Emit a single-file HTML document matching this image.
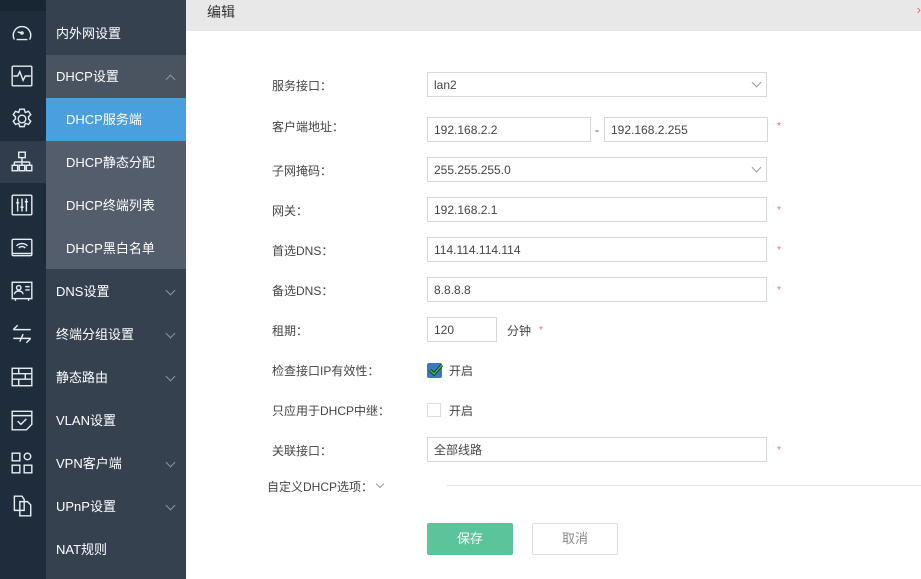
<!DOCTYPE html>
<html><head><meta charset="utf-8"><style>
*{margin:0;padding:0;box-sizing:border-box}
body{width:921px;height:579px;overflow:hidden;background:#fff;font-family:"Liberation Sans","Noto Sans CJK SC",sans-serif;position:relative}
.ic{position:absolute;left:0;top:0;width:46px;height:579px;background:#1f2c3b}
.ic .top{position:absolute;left:0;top:0;width:46px;height:11px;background:#1a2534}
.ic .hl{position:absolute;left:0;top:141px;width:46px;height:42px;background:#313d4c}
.ic svg{position:absolute;left:10px;width:24px;height:24px;fill:none;stroke:#e6ecf2;stroke-width:1.3}
.menu{position:absolute;left:46px;top:0;width:140px;height:579px;background:#364150}
.mi{position:absolute;left:0;width:140px;height:43px;line-height:43px;color:#fff;font-size:13px;padding-left:10px}
.mi.sub{padding-left:20px;background:#535d6b}
.mi.act{background:#4a9fdf}
.mi.grp{background:#4a5461}
.chev{position:absolute;right:12px;top:17px;width:7px;height:7px;border-right:1px solid #8a95a2;border-bottom:1px solid #8a95a2;transform:rotate(45deg)}
.chev.up{transform:rotate(-135deg);top:21px}
.hdr{position:absolute;left:186px;top:0;width:735px;height:31px;background:#e8e8e8;font-size:14px;color:#333;padding:2px 0 0 21px}
.lbl{position:absolute;left:272px;font-size:12px;color:#444}
.inp{position:absolute;height:25px;border:1px solid #d8d8d8;font-size:12px;color:#444;padding-left:6px;line-height:25px}
.star{position:absolute;color:#e66;font-size:10px}
.dd{position:absolute;right:6px;top:6px;width:7px;height:7px;border-right:1px solid #999;border-bottom:1px solid #999;transform:rotate(45deg)}
.t{position:absolute;font-size:12px;color:#444}
</style></head><body>
<div class="ic"><div class="top"></div><div class="hl"></div>
<svg style="top:21px" viewBox="0 0 22 22"><path d="M4 17A8 8 0 1 1 18 17"/><path d="M6 17h10M11 11l-4-1"/><circle cx="11" cy="11" r="1"/></svg>
<svg style="top:64px" viewBox="0 0 22 22"><rect x="2" y="2" width="18" height="18" rx="1"/><path d="M3 11h4l2-4 3 8 2-4h5"/></svg>
<svg style="top:107px" viewBox="0 0 22 22"><circle cx="11" cy="11" r="3.5"/><path d="M9 2h4l1 3 3-1 2 3-2 2 0 2 2 2-2 3-3-1-1 3h-4l-1-3-3 1-2-3 2-2v-2l-2-2 2-3 3 1z"/></svg>
<svg style="top:150px" viewBox="0 0 22 22"><rect x="8" y="2" width="6" height="5"/><path d="M11 7v4M4 11h14M4 11v3M11 11v3M18 11v3"/><rect x="2" y="14" width="5" height="5"/><rect x="8.5" y="14" width="5" height="5"/><rect x="15" y="14" width="5" height="5"/></svg>
<svg style="top:193px" viewBox="0 0 22 22"><rect x="2" y="2" width="18" height="18" rx="1"/><path d="M7 5v12M11 5v12M15 5v12M5.5 9h3M9.5 13h3M13.5 8h3"/></svg>
<svg style="top:236px" viewBox="0 0 22 22"><rect x="2" y="3" width="18" height="15" rx="1"/><path d="M2 16h18M6 9a7 7 0 0 1 10 0M8 11a4 4 0 0 1 6 0"/></svg>
<svg style="top:279px" viewBox="0 0 22 22"><rect x="2" y="3" width="18" height="15"/><circle cx="8" cy="8" r="2"/><path d="M4 14a4 3 0 0 1 8 0M14 7h4M14 10h4M5 18v2M17 18v2"/></svg>
<svg style="top:322px" viewBox="0 0 22 22"><path d="M3 7h16M3 7l4-4M19 15H3M19 15l-4 4M12 11l-3 7"/></svg>
<svg style="top:365px" viewBox="0 0 22 22"><rect x="2" y="3" width="18" height="16"/><path d="M2 8h18M2 13h18M8 3v5M14 8v5M8 13v6"/></svg>
<svg style="top:408px" viewBox="0 0 22 22"><path d="M2 3h18v12l-5 5H2zM2 7h18M7 12l3 3 5-5"/></svg>
<svg style="top:451px" viewBox="0 0 22 22"><rect x="2" y="2" width="7" height="7"/><rect x="2" y="13" width="7" height="7"/><rect x="13" y="13" width="7" height="7"/><circle cx="16" cy="5" r="3"/></svg>
<svg style="top:494px" viewBox="0 0 22 22"><path d="M4 2h7l2 3v10H4zM9 7h7l3 3v10H9z"/></svg>
</div>
<div class="menu">
<div class="mi" style="top:12px">内外网设置</div>
<div class="mi grp" style="top:55px">DHCP设置<span class="chev up"></span></div>
<div class="mi sub act" style="top:98px">DHCP服务端</div>
<div class="mi sub" style="top:141px">DHCP静态分配</div>
<div class="mi sub" style="top:184px">DHCP终端列表</div>
<div class="mi sub" style="top:227px;height:42px">DHCP黑白名单</div>
<div class="mi" style="top:270px">DNS设置<span class="chev"></span></div>
<div class="mi" style="top:313px">终端分组设置<span class="chev"></span></div>
<div class="mi" style="top:356px">静态路由<span class="chev"></span></div>
<div class="mi" style="top:399px">VLAN设置</div>
<div class="mi" style="top:442px">VPN客户端<span class="chev"></span></div>
<div class="mi" style="top:485px">UPnP设置<span class="chev"></span></div>
<div class="mi" style="top:528px">NAT规则</div>
</div>
<div class="hdr">编辑<span style="position:absolute;right:0;top:2px;color:#e66;font-size:13px">›</span></div>

<div class="lbl" style="top:77px">服务接口：</div>
<div class="inp" style="left:427px;top:72px;width:340px">lan2<span class="dd"></span></div>
<div class="lbl" style="top:118px">客户端地址：</div>
<div class="inp" style="left:427px;top:117px;width:164px">192.168.2.2</div>
<div class="t" style="left:595px;top:123px">-</div>
<div class="inp" style="left:604px;top:117px;width:164px">192.168.2.255</div>
<div class="star" style="left:777px;top:121px">*</div>
<div class="lbl" style="top:162px">子网掩码：</div>
<div class="inp" style="left:427px;top:157px;width:340px">255.255.255.0<span class="dd"></span></div>
<div class="lbl" style="top:202px">网关：</div>
<div class="inp" style="left:427px;top:197px;width:340px">192.168.2.1</div>
<div class="star" style="left:777px;top:205px">*</div>
<div class="lbl" style="top:242px">首选DNS：</div>
<div class="inp" style="left:427px;top:237px;width:340px">114.114.114.114</div>
<div class="star" style="left:777px;top:245px">*</div>
<div class="lbl" style="top:282px">备选DNS：</div>
<div class="inp" style="left:427px;top:277px;width:340px">8.8.8.8</div>
<div class="star" style="left:777px;top:285px">*</div>
<div class="lbl" style="top:322px">租期：</div>
<div class="inp" style="left:427px;top:317px;width:70px">120</div>
<div class="t" style="left:507px;top:322px">分钟</div>
<div class="star" style="left:539px;top:325px">*</div>
<div class="lbl" style="top:362px">检查接口IP有效性：</div>
<div style="position:absolute;left:427px;top:363px;width:15px;height:15px;background:#3b78c2;border-radius:2px"></div>
<svg style="position:absolute;left:428px;top:362px" width="16" height="16" viewBox="0 0 16 16"><path d="M2 8l4 4 8-9" fill="none" stroke="#1a1a1a" stroke-width="3"/><path d="M2 8l4 4 8-9" fill="none" stroke="#3c3" stroke-width="1.5"/></svg>
<div class="t" style="left:449px;top:362px">开启</div>
<div class="lbl" style="top:402px">只应用于DHCP中继：</div>
<div style="position:absolute;left:427px;top:403px;width:14px;height:14px;border:1px solid #ddd"></div>
<div class="t" style="left:449px;top:402px">开启</div>
<div class="lbl" style="top:442px">关联接口：</div>
<div class="inp" style="left:427px;top:437px;width:340px">全部线路</div>
<div class="star" style="left:777px;top:445px">*</div>
<div class="t" style="left:267px;top:478px">自定义DHCP选项：</div>
<div style="position:absolute;left:377px;top:481px;width:6px;height:6px;border-right:1px solid #999;border-bottom:1px solid #999;transform:rotate(45deg)"></div>
<div style="position:absolute;left:447px;top:485px;width:474px;height:1px;background:#e4e4e4"></div>
<div style="position:absolute;left:427px;top:523px;width:86px;height:32px;background:#5ac59a;border-radius:2px;color:#fff;font-size:13px;text-align:center;line-height:32px">保存</div>
<div style="position:absolute;left:532px;top:523px;width:86px;height:32px;border:1px solid #ddd;border-radius:2px;color:#888;font-size:13px;text-align:center;line-height:30px">取消</div>
</body></html>
